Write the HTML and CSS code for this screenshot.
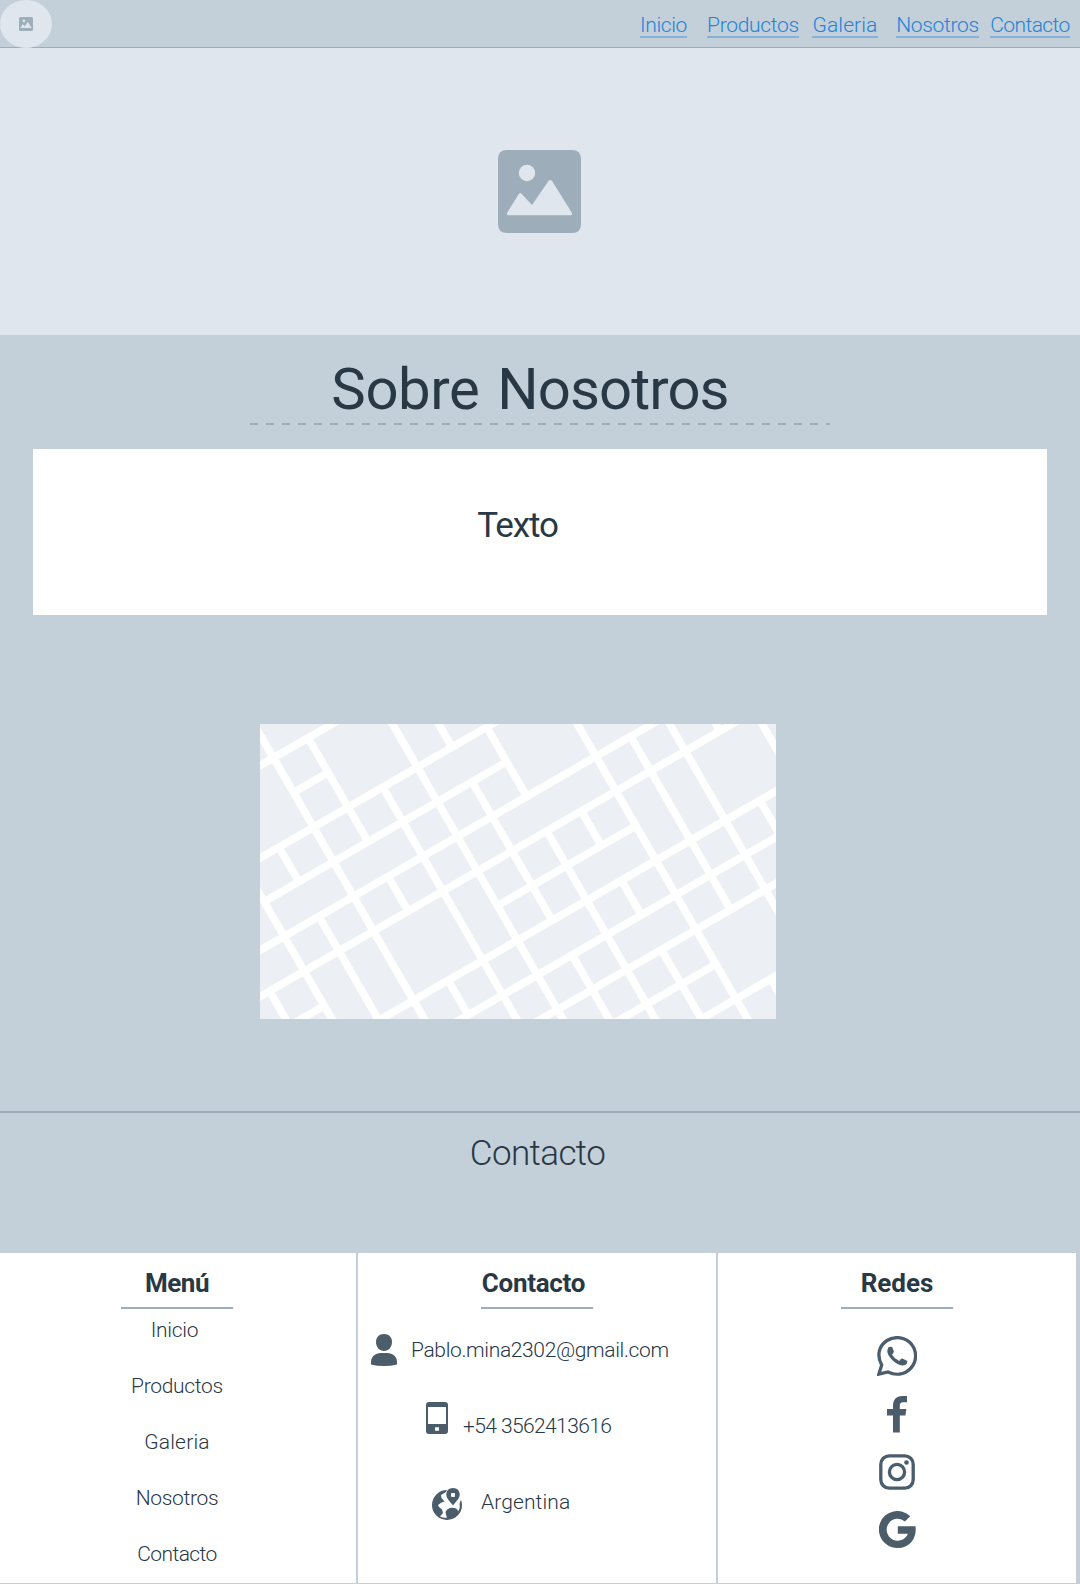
FILE: index.html
```html
<!DOCTYPE html>
<html lang="es">
<head>
<meta charset="utf-8">
<title>Sobre Nosotros</title>
<link rel="stylesheet" href="styles.css">
</head>
<body>
<svg class="defs" width="0" height="0" aria-hidden="true">
  <symbol id="picture" viewBox="0 0 83 83">
    <path fill="#9eadba" d="M9 0H74Q83 0 83 9V74Q83 83 74 83H9Q0 83 0 74V9Q0 0 9 0Z"/>
    <circle cx="29" cy="23" r="8.2" fill="#dfe6ee"/>
    <path fill="#dfe6ee" d="M9.3 62.5L20.8 44Q22.3 42 23.8 44L34 55L50.5 31Q52.2 29 54 31L73.7 62.5Q74.7 65.2 72.5 65.2H10.5Q8.300 65.200 9.300 62.500Z"/>
  </symbol>
</svg>

<header class="topbar">
  <div class="logo"><svg width="14" height="14"><use href="#picture"/></svg></div>
  <nav class="nav">
    <a class="inicio">Inicio</a>
    <a class="productos">Productos</a>
    <a class="galeria">Galeria</a>
    <a class="nosotros">Nosotros</a>
    <a class="contacto">Contacto</a>
  </nav>
</header>

<section class="hero"><svg width="83" height="83"><use href="#picture"/></svg></section>

<main class="about">
  <h1>Sobre <span>Nosotros</span></h1>
  <svg class="dashes" width="580" height="2"><path d="M0 1H580" stroke="#9eadba" stroke-width="2" stroke-dasharray="8 8"/></svg>
  <div class="textbox">Texto</div>
  <svg class="map" width="516" height="295" viewBox="0 0 1548 885">
    <rect width="1548" height="885" fill="#ecf0f5"/>
    <g transform="translate(160.5 309.5) rotate(-30) scale(120)" fill="none" stroke="#fff" stroke-width=".19">
      <path d="M-3-2H3M0-1H1M-3 0H7M-2 1H5M-4 2H11M-4 3H13M-3 4H-2M3 4H7M-1 5H13M0 6H13M2 7H13M4 8H7M6 9H11"/>
      <path d="M-3 3V5M-2 0V6M-1 0V1M-1 2V5M0-4V7M1-2V1M1 2V3M1 5V6M2 0V8M3-3V9M4-2V0M4 1V5M4 6V9M5 0V2M5 3V9M6 3V4M6 5V6M6 7V9M7 0V11M8 2V7M8 9V10M9 0V9M10 2V3M10 5V7M11 2V5"/>
    </g>
  </svg>
</main>

<section class="contact-title"><h2>Contacto</h2></section>

<footer class="footer">
  <section class="col menu">
    <h3>Menú</h3>
    <ul>
      <li class="first">Inicio</li>
      <li>Productos</li>
      <li class="wide">Galeria</li>
      <li>Nosotros</li>
      <li class="tight">Contacto</li>
    </ul>
  </section>
  <section class="col reach">
    <h3>Contacto</h3>
    <div class="row email">
      <svg width="26" height="32" viewBox="0 0 26 32" fill="#4b5c6b"><path d="M13 0C18 0 21 3.500 21 8C21 13 17.500 17 13 17S5 13 5 8C5 3.500 8 0 13 0Z"/><path d="M0 30.500V28C0 22.500 4.500 19 9.500 19H16.500C21.500 19 26 22.500 26 28V30.500Q20 32 13 32T0 30.500Z"/></svg>
      <span>Pablo.mina2302@gmail.com</span>
    </div>
    <div class="row phone">
      <svg width="22" height="32" viewBox="0 0 22 32"><path fill="#4b5c6b" fill-rule="evenodd" d="M3 0H19Q22 0 22 3V29Q22 32 19 32H3Q0 32 0 29V3Q0 0 3 0ZM2 5V22H20V5ZM9 25.200V28.800H13V25.200Z"/></svg>
      <span>+54 3562413616</span>
    </div>
    <div class="row place">
      <svg width="30" height="32" viewBox="0 0 30 32">
        <circle cx="15" cy="17" r="15" fill="#4b5c6b"/>
        <path fill="#fff" d="M9 7L15 3.500L27 2L29 11.500L27.500 16Q28.500 20 26 23.500Q26 21.500 24 20.500Q22 19.500 18 20Q14.500 21 13.500 24Q14 27 15 29.500Q12 30.200 8 28.500Q9.500 26.500 11 25L10 21.500Q6.500 19.500 6 17L9.500 14.500L12.500 13.500L9.500 10Z"/>
        <path fill="#4b5c6b" stroke="#fff" stroke-width="1.400" paint-order="stroke" d="M21 0C25 0 27.700 2.800 27.700 6.500C27.700 10.500 24 13.500 21 17.500C18 13.500 14.300 10.500 14.300 6.500C14.300 2.800 17 0 21 0Z"/>
        <rect x="19" y="5" width="4" height="4" rx="1" fill="#fff"/>
      </svg>
      <span>Argentina</span>
    </div>
  </section>
  <section class="col social">
    <h3>Redes</h3>
    <div class="icons">
      <svg class="wa" width="40" height="40" viewBox="0 0 40 40"><path fill="none" stroke="#4b5c6b" stroke-width="3.300" d="M1.900 38.100L4.700 29C-.8 19 2.300 9.500 10 4.500C18-.5 29 1.200 34.700 8.500C40.500 16 39.700 26.500 33 33C27 38.800 18.500 39.500 11 36Z"/><path fill="#4b5c6b" d="M11.500 11.200Q13.500 10.300 15.200 11L16.900 15.500Q16.500 17.500 15 18.800Q17.500 23 22.200 25Q24 22.500 25.500 22.600L30.300 25Q30.500 28 28 29Q23.500 30.500 17.500 26Q11.500 21 10.300 16Q10 13 11.500 11.200Z"/></svg>
      <svg class="fb" width="20" height="37" viewBox="0 0 20 37"><path fill="#4b5c6b" d="M6 36.500V19.500H0V13H6V10C6 3.500 9.500 0 15 0H20V6.200H16.200C13.500 6.200 12.800 7.500 12.800 9.500V13H19.400L18.400 19.500H12.800V36.500Z"/></svg>
      <svg class="ig" width="36" height="36" viewBox="0 0 36 36" fill="none" stroke="#4b5c6b" stroke-width="3.300"><rect x="1.800" y="1.800" width="32.400" height="32.400" rx="8.500"/><circle cx="18" cy="18" r="7.600"/><circle cx="27.500" cy="8.500" r="2.300" fill="#4b5c6b" stroke="none"/></svg>
      <svg class="gg" width="37" height="37" viewBox="0 0 37 37"><path fill="#4b5c6b" d="M31.200 5.200L25.900 10.400A11 11 0 1 0 28.900 22.800H18.800V15.300H36.500C38 26.500 31.500 37 18.500 37A18.500 18.500 0 1 1 31.200 5.200Z"/></svg>
    </div>
  </section>
</footer>
</body>
</html>
```
FILE: styles.css
```css
* { box-sizing: border-box; }
body {
  margin: 0;
  width: 1080px;
  height: 1584px;
  overflow: hidden;
  background: #c3cfd9;
  color: #283845;
  font-family: Roboto, "Liberation Sans", sans-serif;
  font-size: 21px;
  font-weight: 300;
}
svg { display: block; flex: none; }
.defs { position: absolute; }
h1, h2, h3, ul { margin: 0; padding: 0; font-weight: 400; }
ul { list-style: none; font-weight: 300; }

.topbar {
  display: flex;
  justify-content: space-between;
  height: 48px;
  border-bottom: 1px solid #9eadba;
}
.logo {
  display: flex;
  align-items: center;
  justify-content: center;
  width: 52px;
  height: 48px;
  border-radius: 50%;
  background: #dfe6ee;
}
.nav { display: flex; padding: 14px 10px 0 0; }
.nav a {
  height: 24px;
  line-height: 22px;
  border-bottom: 2px solid #87b1da;
  color: #2283d8;
  text-align: center;
  white-space: nowrap;
}
.inicio { width: 47px; margin-right: 20px; letter-spacing: -.4px; }
.productos { width: 92px; margin-right: 13px; letter-spacing: -.3px; }
.galeria { width: 66px; margin-right: 18px; letter-spacing: .1px; }
.nosotros { width: 83px; margin-right: 11px; letter-spacing: -.3px; }
.contacto { width: 80px; letter-spacing: -.6px; }

.hero {
  display: flex;
  justify-content: center;
  height: 287px;
  padding: 102px 2px 0 0;
  background: #dfe6ee;
}

.about {
  display: flex;
  flex-direction: column;
  height: 776px;
  padding-top: 25px;
}
h1 { padding-right: 20px; font-size: 58px; line-height: 58px; text-align: center; letter-spacing: -.4px; word-spacing: 4px; }
h1 span { letter-spacing: -.9px; }
.dashes { margin: 5px 0 24px 250px; }
.textbox {
  width: 1014px;
  height: 166px;
  margin-left: 33px;
  padding-right: 45px;
  background: #fff;
  font-size: 35px;
  font-weight: 400;
  line-height: 154px;
  letter-spacing: -1.1px;
  text-align: center;
}
.map { margin: 109px 0 0 260px; }

.contact-title {
  height: 142px;
  padding: 21px 5px 0 0;
  border-top: 2px solid #9eadba;
  text-align: center;
}
h2 { font-size: 35px; font-weight: 300; line-height: 40px; letter-spacing: -.6px; }

.footer {
  display: grid;
  grid-template-columns: 356px 358px 358px;
  grid-template-rows: 330px;
  column-gap: 2px;
}
.col { padding-top: 15px; background: #fff; }
h3 {
  width: 112px;
  height: 41px;
  border-bottom: 2px solid #9eadba;
  font-size: 26px;
  font-weight: 700;
  line-height: 30px;
  text-align: center;
}
.menu h3 { margin-left: 121px; letter-spacing: -.5px; }
.reach h3 { margin-left: 123px; padding-right: 7px; letter-spacing: -.3px; }
.social h3 { margin-left: 123px; }
.menu ul {
  display: grid;
  row-gap: 32px;
  width: 354px;
  padding-top: 9px;
  text-align: center;
  letter-spacing: -.3px;
}
.menu li { line-height: 24px; }
.menu .first { padding-right: 5px; }
.menu .wide { letter-spacing: .2px; }
.menu .tight { letter-spacing: -.6px; }
.row { display: flex; height: 32px; line-height: 24px; white-space: nowrap; }
.email { margin: 25px 0 0 13px; }
.email span { padding: 4px 0 0 14px; letter-spacing: -.36px; }
.phone { margin: 36px 0 0 68px; }
.phone span { padding: 12px 0 0 15px; letter-spacing: -.6px; }
.place { margin: 54px 0 0 74px; }
.place span { padding: 2px 0 0 19px; letter-spacing: .1px; }
.icons {
  display: flex;
  flex-direction: column;
  align-items: center;
  width: 358px;
  padding-top: 27px;
}
.fb { margin-top: 20px; }
.ig { margin-top: 21px; }
.gg { margin-top: 21px; }
```
